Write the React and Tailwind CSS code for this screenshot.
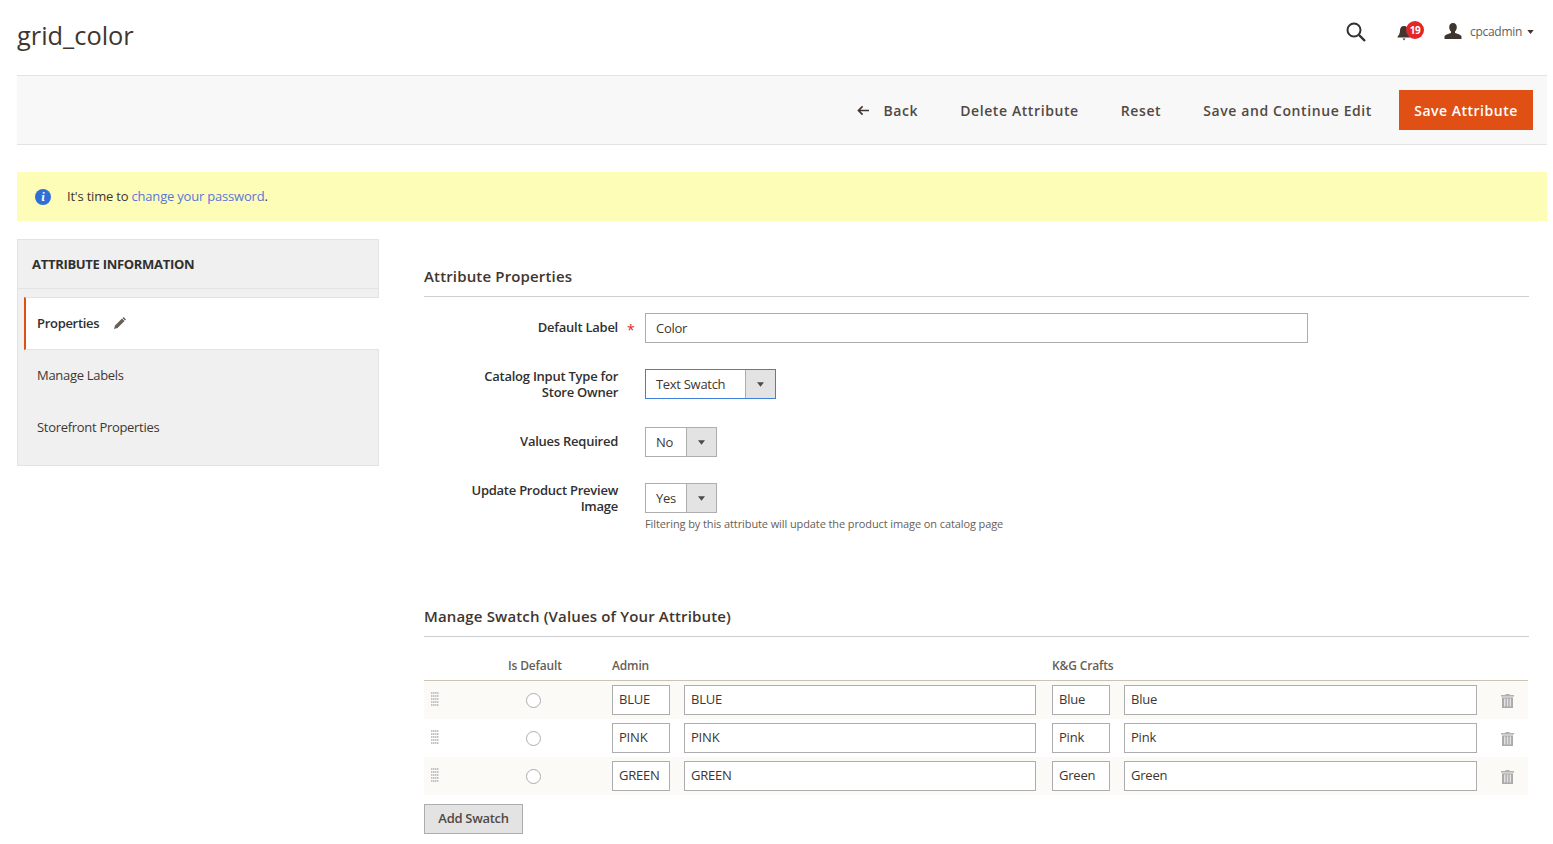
import { useState } from "react";

const FONT = { fontFamily: '"Open Sans", "Noto Sans", sans-serif' };

const SWATCHES = [
  { admin: "BLUE", store: "Blue" },
  { admin: "PINK", store: "Pink" },
  { admin: "GREEN", store: "Green" },
];

function Caret({ className }) {
  return (
    <svg viewBox="0 0 8 5" className={className} fill="currentColor">
      <path d="M0 0h8L4 5z" />
    </svg>
  );
}

function SelectBox({ value, width, focused }) {
  return (
    <div className={`flex h-[30px] border bg-white ${focused ? "border-[#3f7fd8]" : "border-[#adadad]"} ${width}`}>
      <div className="flex-1 pl-[10px] text-[13px] leading-[28px] tracking-[-0.3px] text-[#41362f]">{value}</div>
      <div className="flex w-[30px] items-center justify-center border-l border-[#adadad] bg-[#e3e3e3] text-[#514943]">
        <Caret className="h-[5px] w-[7px]" />
      </div>
    </div>
  );
}

function FieldLabel({ children }) {
  return (
    <div className="w-[194px] shrink-0 text-right text-[13px] font-semibold leading-[16px] tracking-[-0.25px] text-[#303030]">
      {children}
    </div>
  );
}

function DragHandle() {
  const dots = [];
  for (let y = 0; y < 5; y++) {
    for (let x = 0; x < 4; x++) {
      dots.push(<rect key={`${x}-${y}`} x={x * 2} y={y * 3} width="1.5" height="2" />);
    }
  }
  return (
    <svg viewBox="0 0 8 14" className="h-[14px] w-[8px] text-[#c4c4c4]" fill="currentColor">
      {dots}
    </svg>
  );
}

function Trash() {
  return (
    <svg viewBox="0 0 13 15" className="h-[15px] w-[13px]">
      <path d="M4.5 1h4v1h-4z" fill="#adadad" />
      <path d="M0 2h13v1.6H0z" fill="#b5b1ad" />
      <path d="M1 4.4h11V15H1z" fill="#ada9a5" />
      <path d="M3 5.5h1.5v8H3zM5.8 5.5h1.5v8H5.8zM8.6 5.5h1.5v8H8.6z" fill="#dde3e8" />
    </svg>
  );
}

function CellInput({ value, width }) {
  return (
    <div className={`h-[30px] shrink-0 border border-[#adadad] bg-white pl-[6px] text-[13px] leading-[26px] tracking-[-0.2px] text-[#41362f] ${width}`}>
      {value}
    </div>
  );
}

function SwatchRow({ row, odd }) {
  return (
    <div className={`flex h-[38px] items-center ${odd ? "bg-[#fbfaf6]" : "bg-white"}`}>
      <div className="ml-[7px] mb-[2px] w-[8px]">
        <DragHandle />
      </div>
      <div className="ml-[87px] mt-[1px] h-[15px] w-[15px] rounded-full border border-[#adadad] bg-white" />
      <div className="ml-[71px] flex">
        <CellInput value={row.admin} width="w-[58px]" />
        <div className="w-[14px]" />
        <CellInput value={row.admin} width="w-[352px]" />
        <div className="w-[16px]" />
        <CellInput value={row.store} width="w-[58px]" />
        <div className="w-[14px]" />
        <CellInput value={row.store} width="w-[353px]" />
      </div>
      <div className="ml-[24px] mt-[1px]">
        <Trash />
      </div>
    </div>
  );
}

export default function App() {
  const [tab] = useState("Properties");

  return (
    <div style={FONT} className="h-[844px] overflow-hidden bg-white pl-[17px] pr-[6px] text-[#41362f]">
      {/* Header */}
      <header className="flex h-[75px] justify-between">
        <h1 className="mt-[18px] text-[25.4px] leading-[34px] text-[#41362f]">grid_color</h1>
        <div className="mr-[13px] mt-[21px] flex h-[22px] items-start">
          <svg viewBox="0 0 20 20" className="mt-[1px] h-[20px] w-[20px] text-[#303030]" fill="none" stroke="currentColor" strokeWidth="2">
            <circle cx="8" cy="8" r="6.5" />
            <path d="M13 13l6 6" strokeWidth="2.4" />
          </svg>
          <div className="relative ml-[31px] mt-[4px] w-[26px]">
            <svg viewBox="0 0 14 16" className="h-[16px] w-[14px] text-[#41362f]" fill="currentColor">
              <path d="M7 1c-2.6 0-4 2-4 4.5 0 3-1 4.6-2.2 5.7-.4.4-.3 1.3.4 1.3h11.6c.7 0 .8-.9.4-1.3C11.5 10 11 8.500 11 5.500 11 3 9.600 1 7 1z" />
              <path d="M5.500 13.500h3L7 15.500z" />
            </svg>
            <span className="absolute left-[9px] top-[-4px] flex h-[18px] w-[18px] items-center justify-center rounded-full bg-[#e22626] text-[10px] font-bold tracking-[-0.3px] text-white">
              19
            </span>
          </div>
          <svg viewBox="0 0 18 16" className="ml-[21px] mt-[2px] h-[16px] w-[18px] text-[#41362f]" fill="currentColor">
            <path d="M9 0c2.500 0 3.800 1.800 3.800 4.200 0 1.800-.8 3.300-1.800 4.300v1.400c2 .8 6 1.400 6.500 3.600V16H.5v-2.500C1 11.300 5 10.700 7 9.900V8.500C6 7.500 5.200 6 5.200 4.200 5.200 1.800 6.500 0 9 0z" />
          </svg>
          <span className="ml-[8px] mt-[2px] text-[12px] leading-[18px] tracking-[-0.3px] text-[#676056]">cpcadmin</span>
          <Caret className="ml-[5px] mt-[9px] h-[4px] w-[7px] text-[#41362f]" />
        </div>
      </header>

      {/* Toolbar */}
      <div className="flex h-[70px] items-center justify-end border-y border-[#e3e3e3] bg-[#f8f8f8] pr-[14px] text-[14px] font-semibold tracking-[0.6px] text-[#514943]">
        <svg viewBox="0 0 14 12" className="mr-[13px] h-[11px] w-[13px] text-[#41362f]" fill="none" stroke="currentColor" strokeWidth="1.800">
          <path d="M13 6H2M6 1.500L1.500 6 6 10.500" />
        </svg>
        <span>Back</span>
        <span className="ml-[42px]">Delete Attribute</span>
        <span className="ml-[42px]">Reset</span>
        <span className="ml-[42px]">Save and Continue Edit</span>
        <button className="ml-[27px] h-[40px] w-[134px] bg-[#e04f13] text-[14px] font-semibold tracking-[0.5px] text-white">
          Save Attribute
        </button>
      </div>

      {/* Password notice */}
      <div className="mt-[27px] flex h-[49px] items-center bg-[#fdfdb8] pl-[18px] text-[13px] tracking-[-0.2px] text-[#41362f]">
        <span className="flex h-[16px] w-[16px] items-center justify-center rounded-full bg-[#2f6fd6] font-serif text-[12px] font-bold italic text-white">
          i
        </span>
        <span className="ml-[16px]">
          It's time to <span className="text-[#5a76d8]">change your password</span>.
        </span>
      </div>

      <div className="mt-[18px] flex items-start">
        {/* Sidebar */}
        <aside className="w-[362px] shrink-0 border border-[#e3e3e3] bg-[#f0f0f0]">
          <div className="flex h-[49px] items-center border-b border-[#e3e3e3] pt-[2px] pl-[14px] text-[13px] font-bold tracking-[-0.3px] text-[#303030]">
            ATTRIBUTE INFORMATION
          </div>
          <div className="h-[8px]" />
          <div className="ml-[6px] mr-[-1px] flex h-[53px] items-center border-y border-[#e3e3e3] border-l-2 border-l-[#e04f13] bg-white pl-[11px] text-[13px] font-semibold tracking-[-0.3px] text-[#303030]">
            {tab}
            <svg viewBox="0 0 14 14" className="mb-[2px] ml-[14px] h-[14px] w-[14px] text-[#676056]" fill="currentColor">
              <path d="M10.500 1l2.500 2.500-1 1L9.500 2zM9 2.500L11.500 5l-7 7L1 13l1-3.500z" />
            </svg>
          </div>
          <div className="flex h-[52px] items-center pl-[19px] text-[13px] tracking-[-0.3px] text-[#41362f]">Manage Labels</div>
          <div className="flex h-[52px] items-center pl-[19px] text-[13px] tracking-[-0.3px] text-[#41362f]">Storefront Properties</div>
          <div className="h-[11px]" />
        </aside>

        {/* Main form */}
        <main className="ml-[45px] w-[1105px]">
          <h2 className="mt-[27px] border-b border-[#cfcfcf] pb-[10px] text-[15px] font-semibold leading-[20px] tracking-[0.15px] text-[#41362f]">
            Attribute Properties
          </h2>

          <div className="mt-[16px] flex h-[30px]">
            <div className="pt-[6px]">
              <FieldLabel>Default Label</FieldLabel>
            </div>
            <span className="ml-[9px] w-[18px] pt-[9px] text-[14px] leading-[16px] text-[#e22626]">*</span>
            <div className="h-[30px] w-[663px] border border-[#adadad] bg-white pl-[10px] text-[13px] leading-[28px] tracking-[-0.3px] text-[#41362f]">
              Color
            </div>
          </div>

          <div className="mt-[26px] flex">
            <div className="mt-[-1px]">
              <FieldLabel>
                Catalog Input Type for
                <br />
                Store Owner
              </FieldLabel>
            </div>
            <div className="ml-[27px]">
              <SelectBox value="Text Swatch" width="w-[131px]" focused />
            </div>
          </div>

          <div className="mt-[27px] flex h-[30px]">
            <div className="pt-[6px]">
              <FieldLabel>Values Required</FieldLabel>
            </div>
            <div className="ml-[27px]">
              <SelectBox value="No" width="w-[72px]" />
            </div>
          </div>

          <div className="mt-[26px] flex">
            <div className="mt-[-1px]">
              <FieldLabel>
                Update Product Preview
                <br />
                Image
              </FieldLabel>
            </div>
            <div className="ml-[27px]">
              <SelectBox value="Yes" width="w-[72px]" />
              <p className="mt-[3px] text-[11px] leading-[16px] tracking-[-0.1px] text-[#676056]">
                Filtering by this attribute will update the product image on catalog page
              </p>
            </div>
          </div>

          <h2 className="mt-[74px] border-b border-[#cfcfcf] pb-[10px] text-[15px] font-semibold leading-[20px] tracking-[0.15px] text-[#41362f]">
            Manage Swatch (Values of Your Attribute)
          </h2>

          {/* Swatch table */}
          <div className="mr-[1px] mt-[20px]">
            <div className="flex h-[24px] border-b border-[#cac3b4] text-[12px] font-semibold leading-[18px] tracking-[-0.15px] text-[#676056]">
              <span className="ml-[84px] w-[104px]">Is Default</span>
              <span className="w-[440px]">Admin</span>
              <span>K&amp;G Crafts</span>
            </div>
            {SWATCHES.map((row, i) => (
              <SwatchRow key={row.admin} row={row} odd={i % 2 === 0} />
            ))}
          </div>

          <button className="mt-[9px] h-[30px] w-[99px] border border-[#adadad] bg-[#e3e3e3] text-[13px] font-semibold tracking-[-0.3px] text-[#514943]">
            Add Swatch
          </button>
        </main>
      </div>
    </div>
  );
}
